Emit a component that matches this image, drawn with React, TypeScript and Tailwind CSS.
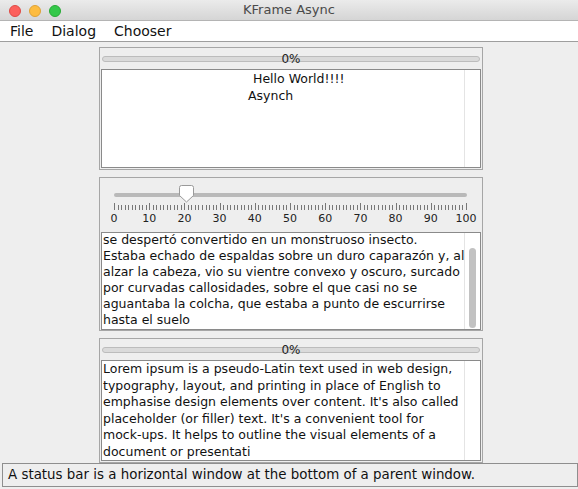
import React from 'react'

const font = { fontFamily: '"DejaVu Sans", "Liberation Sans", sans-serif' }

function ProgressRow() {
    return (
        <div className="relative h-[20px] flex items-center px-[2px]">
            <div className="w-full h-[6px] rounded-full bg-[#dadada] border border-[#bcbcbc]" />
            <div className="absolute inset-0 flex items-center justify-center text-[12px] text-[#222]">0%</div>
        </div>
    )
}

function TextArea({ children, className, scroll, textClass }: { children: React.ReactNode; className: string; scroll?: boolean; textClass: string }) {
    return (
        <div className={`mx-[1px] border border-[#8a8a8a] bg-white flex overflow-hidden ${className}`}>
            <div className={`flex-1 pl-[1px] text-[12.5px] text-[#111] ${textClass}`}>{children}</div>
            <div className="w-[16px] shrink-0 border-l border-[#e4e4e4] flex justify-center">
                {scroll && <div className="mt-[15px] w-[7px] h-[80px] rounded-full bg-[#c2c2c2]" />}
            </div>
        </div>
    )
}

function Lines({ lines }: { lines: string[] }) {
    return (
        <>
            {lines.map((l, i) => (
                <div key={i} className="whitespace-nowrap">{l}</div>
            ))}
        </>
    )
}

function Slider() {
    const ticks = Array.from({ length: 101 }, (_, i) => i)
    const labels = [0, 10, 20, 30, 40, 50, 60, 70, 80, 90, 100]
    const x0 = 14
    const span = 352
    return (
        <div className="relative h-[54px]">
            <svg width="382" height="40" className="absolute left-0 top-0">
                <rect x={x0} y={15} width={span + 1} height={4} rx={2} fill="#b9b9b9" />
                {ticks.map(t => {
                    const x = x0 + 0.5 + Math.round((t * span) / 100)
                    const big = t % 10 === 0
                    return <line key={t} x1={x} x2={x} y1={big ? 25 : 27} y2={32} stroke="#777" strokeWidth={1} />
                })}
                <path d="M79.5 9.5 Q79.5 7.5 81.5 7.5 L91.5 7.5 Q93.5 7.5 93.5 9.5 L93.5 17.5 L86.5 24 L79.5 17.5 Z" fill="#fff" stroke="#9a9a9a" />
            </svg>
            {labels.map(l => (
                <div
                    key={l}
                    className="absolute top-[34px] text-[11px] leading-[14px] text-[#222] -translate-x-1/2"
                    style={{ left: x0 + (l * span) / 100 }}
                >
                    {l}
                </div>
            ))}
        </div>
    )
}

export default function App() {
    return (
        <div className="w-[578px] h-[489px] bg-[#eeeeee] flex flex-col overflow-hidden" style={font}>
            <div className="h-[21px] bg-gradient-to-b from-[#ebebeb] to-[#d5d5d5] border-b border-[#b4b4b4] relative flex items-center justify-center">
                <div className="absolute left-[9px] top-[5px] flex gap-[8px]">
                    <div className="w-[12px] h-[12px] rounded-full bg-[#fc605c] border border-[#de4a45]" />
                    <div className="w-[12px] h-[12px] rounded-full bg-[#fdbc40] border border-[#dea236]" />
                    <div className="w-[12px] h-[12px] rounded-full bg-[#34c84a] border border-[#27aa35]" />
                </div>
                <span className="text-[13px] text-[#4a4a4a]">KFrame Async</span>
            </div>
            <div className="h-[21px] bg-white border-b border-[#9e9e9e] flex items-center text-[14px] text-[#111]">
                <span className="ml-[10px]">File</span>
                <span className="ml-[18px]">Dialog</span>
                <span className="ml-[18px]">Chooser</span>
            </div>
            <div className="flex-1 flex flex-col pt-[5px] pl-[99px] gap-[7px] overflow-hidden">
                <div className="w-[384px] border border-[#a6a6a6] pt-[1px] pb-[1px]">
                    <ProgressRow />
                    <TextArea className="h-[99px]" textClass="leading-[17px]">
                        <div className="pl-[150px] whitespace-nowrap">Hello World!!!!</div>
                        <div className="pl-[145px] whitespace-nowrap">Asynch</div>
                    </TextArea>
                </div>
                <div className="w-[384px] border border-[#a6a6a6]">
                    <Slider />
                    <TextArea className="h-[98px]" scroll textClass="-mt-[1px] leading-[16px]">
                        <Lines
                            lines={[
                                'se despertó convertido en un monstruoso insecto.',
                                'Estaba echado de espaldas sobre un duro caparazón y, al',
                                'alzar la cabeza, vio su vientre convexo y oscuro, surcado',
                                'por curvadas callosidades, sobre el que casi no se',
                                'aguantaba la colcha, que estaba a punto de escurrirse',
                                'hasta el suelo',
                            ]}
                        />
                    </TextArea>
                </div>
                <div className="w-[384px] border border-[#a6a6a6] pt-[1px] pb-[1px] shrink-0">
                    <ProgressRow />
                    <TextArea className="h-[101px]" textClass="leading-[16.5px]">
                        <Lines
                            lines={[
                                'Lorem ipsum is a pseudo-Latin text used in web design,',
                                'typography, layout, and printing in place of English to',
                                "emphasise design elements over content. It's also called",
                                "placeholder (or filler) text. It's a convenient tool for",
                                'mock-ups. It helps to outline the visual elements of a',
                                'document or presentati',
                            ]}
                        />
                    </TextArea>
                </div>
            </div>
            <div className="h-[24px] mb-[2px] ml-[2px] border border-[#8e8e8e] bg-[#eeeeee] flex items-center pl-[5px] text-[13.4px] text-[#111] whitespace-nowrap">
                A status bar is a horizontal window at the bottom of a parent window.
            </div>
        </div>
    )
}
